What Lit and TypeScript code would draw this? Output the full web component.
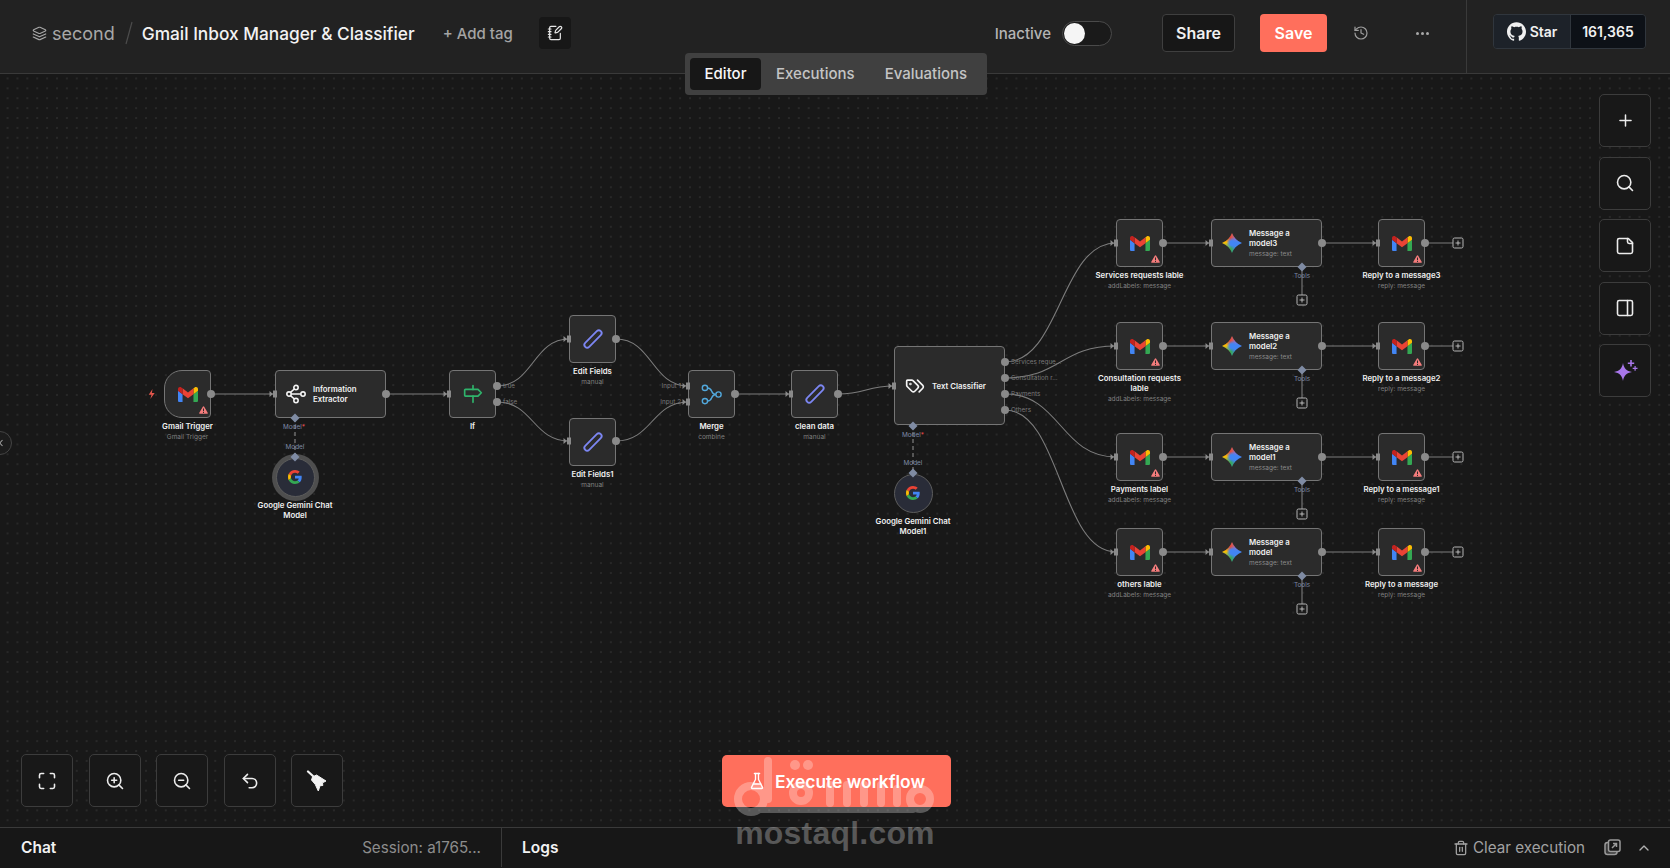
import { LitElement, html, css, svg } from 'lit';
import { customElement } from 'lit/decorators.js';

const TOP = 74;

const line = (d: string, size = 18, width = 2, cls = '') => html`
  <svg class=${cls} width=${size} height=${size} viewBox="0 0 24 24" fill="none" stroke="currentColor"
    stroke-width=${width} stroke-linecap="round" stroke-linejoin="round">
    ${d.split('|').map((p) => svg`<path d=${p}></path>`)}
  </svg>`;

const gmail = () => html`
  <svg width="20" height="15" viewBox="52 42 88 66">
    <path fill="#4285f4" d="M58 108h14V74L52 59v43c0 3.32 2.69 6 6 6" />
    <path fill="#34a853" d="M120 108h14c3.32 0 6-2.69 6-6V59l-20 15" />
    <path fill="#fbbc04" d="M120 48v26l20-15v-8c0-7.42-8.47-11.65-14.4-7.2" />
    <path fill="#ea4335" d="M72 74V48l24 18 24-18v26L96 92" />
    <path fill="#c5221f" d="M52 51v8l20 15V48l-5.6-4.2c-5.94-4.45-14.4-.22-14.4 7.2" />
  </svg>`;

const google = () => html`
  <svg width="14" height="14" viewBox="0 0 48 48">
    <path fill="#EA4335" d="M24 9.5c3.54 0 6.71 1.22 9.21 3.6l6.85-6.85C35.9 2.38 30.47 0 24 0 14.62 0 6.51 5.38 2.56 13.22l7.98 6.19C12.43 13.72 17.74 9.5 24 9.5z" />
    <path fill="#4285F4" d="M46.98 24.55c0-1.57-.15-3.09-.38-4.55H24v9.02h12.94c-.58 2.96-2.26 5.48-4.78 7.18l7.73 6c4.51-4.18 7.09-10.36 7.09-17.65z" />
    <path fill="#FBBC05" d="M10.53 28.59c-.48-1.45-.76-2.99-.76-4.59s.27-3.14.76-4.59l-7.98-6.19C.92 16.46 0 20.12 0 24c0 3.88.92 7.54 2.56 10.78l7.97-6.19z" />
    <path fill="#34A853" d="M24 48c6.48 0 11.93-2.13 15.89-5.81l-7.73-6c-2.15 1.45-4.92 2.3-8.16 2.3-6.26 0-11.57-4.22-13.47-9.91l-7.98 6.19C6.51 42.62 14.62 48 24 48z" />
  </svg>`;

const warn = () => html`
  <svg class="warn" width="9" height="8" viewBox="0 0 18 16">
    <path fill="#f47c7c" d="M9 .5a1.6 1.6 0 0 1 1.4.8l7 12a1.6 1.6 0 0 1-1.4 2.4H2a1.6 1.6 0 0 1-1.4-2.4l7-12A1.6 1.6 0 0 1 9 .5z" />
    <path fill="#2b2b2b" d="M8 5h2v5.5H8zM8 11.8h2v2H8z" />
  </svg>`;

const pencil = () => html`
  <svg width="24" height="24" viewBox="0 0 24 24" fill="none" stroke="#7c86f2" stroke-width="1.8" stroke-linejoin="round">
    <path transform="rotate(45 12 12)" d="M9.2 3.8a2.8 2.8 0 0 1 5.6 0V20.2a2.8 2.8 0 0 1-5.6 0z" />
  </svg>`;

const ifIcon = () => html`
  <svg width="20" height="20" viewBox="0 0 24 24" fill="none" stroke="#2fb36b" stroke-width="2" stroke-linejoin="round" stroke-linecap="round">
    <path d="M3 6.5h15l4 4-4 4H3a1 1 0 0 1-1-1v-6a1 1 0 0 1 1-1z" />
    <path d="M12 2v4.5M12 14.5V22" />
  </svg>`;

const mergeIcon = () => html`
  <svg width="21" height="21" viewBox="0 0 24 24" fill="none" stroke="#52a8dc" stroke-width="1.6">
    <circle cx="4.5" cy="4.5" r="3" /><circle cx="4.5" cy="19.5" r="3" /><circle cx="20" cy="12" r="3" />
    <path d="M7.500 4.500c6.500 0 3 7.500 9.500 7.500M7.500 19.500c6.500 0 3-7.500 9.500-7.500" />
  </svg>`;

const extractorIcon = () => html`
  <svg width="20" height="20" viewBox="0 0 24 24" fill="none" stroke="#f4f4f4" stroke-width="1.9">
    <circle cx="12" cy="4.2" r="2.6" /><circle cx="3.6" cy="12" r="2.6" /><circle cx="20.4" cy="12" r="2.6" /><circle cx="12" cy="19.8" r="2.6" />
    <path d="M6.2 12h11.6M10 6 5.4 10M10 18l-4.6-4" />
  </svg>`;

const tagsIcon = () =>
  html`<svg width="20" height="20" viewBox="0 0 24 24" fill="none" stroke="#f4f4f4" stroke-width="2" stroke-linecap="round" stroke-linejoin="round">
    <path d="m15 5 6.3 6.3a2.4 2.4 0 0 1 0 3.4L17 19" />
    <path d="M9.586 5.586A2 2 0 0 0 8.172 5H3a1 1 0 0 0-1 1v5.172a2 2 0 0 0 .586 1.414L8.29 18.29a2.426 2.426 0 0 0 3.42 0l3.58-3.58a2.426 2.426 0 0 0 0-3.42z" />
    <circle cx="6.5" cy="9.5" r=".5" />
  </svg>`;

const icons: Record<string, () => unknown> = {
  gmail,
  google,
  pencil,
  if: ifIcon,
  merge: mergeIcon,
  extractor: extractorIcon,
  tags: tagsIcon,
  gemini: () => html`<div class="gem"></div>`,
};

type FlowNode = {
  x: number;
  y: number;
  w?: number;
  h?: number;
  icon: string;
  label: string;
  sub?: string;
  cls?: string;
  warn?: boolean;
  wide?: boolean;
};

const ROWS = [
  { y: 243, label: 'Services requests lable', msg: 'Message a model3', reply: 'Reply to a message3' },
  { y: 346, label: 'Consultation requests lable', msg: 'Message a model2', reply: 'Reply to a message2' },
  { y: 457, label: 'Payments label', msg: 'Message a model1', reply: 'Reply to a message1' },
  { y: 552, label: 'others lable', msg: 'Message a model', reply: 'Reply to a message' },
];

const NODES: FlowNode[] = [
  { x: 164, y: 370, icon: 'gmail', label: 'Gmail Trigger', sub: 'Gmail Trigger', cls: 'trigger', warn: true },
  { x: 275, y: 370, w: 111, icon: 'extractor', label: 'Information Extractor', wide: true },
  { x: 449, y: 370, icon: 'if', label: 'If' },
  { x: 569, y: 315, icon: 'pencil', label: 'Edit Fields', sub: 'manual' },
  { x: 569, y: 418, icon: 'pencil', label: 'Edit Fields1', sub: 'manual' },
  { x: 688, y: 370, icon: 'merge', label: 'Merge', sub: 'combine' },
  { x: 791, y: 370, icon: 'pencil', label: 'clean data', sub: 'manual' },
  { x: 894, y: 346, w: 111, h: 79, icon: 'tags', label: 'Text Classifier', wide: true },
  { x: 275.5, y: 457.5, w: 39, h: 39, icon: 'google', label: 'Google Gemini Chat Model', cls: 'round ringed' },
  { x: 893.5, y: 473.5, w: 39, h: 39, icon: 'google', label: 'Google Gemini Chat Model1', cls: 'round' },
  ...ROWS.flatMap((r): FlowNode[] => [
    { x: 1116, y: r.y - 24, icon: 'gmail', label: r.label, sub: 'addLabels: message', warn: true },
    { x: 1211, y: r.y - 24, w: 111, icon: 'gemini', label: r.msg, sub: 'message: text', wide: true },
    { x: 1378, y: r.y - 24, icon: 'gmail', label: r.reply, sub: 'reply: message', warn: true },
  ]),
];

const flow = (sx: number, sy: number, tx: number, ty: number) => {
  const dx = Math.max(Math.abs(tx - sx) / 2, 12);
  return `M${sx} ${sy}C${sx + dx} ${sy} ${tx - dx} ${ty} ${tx} ${ty}`;
};

const CLASSIFIER_OUT = [362, 378, 394, 410];

const EDGES: number[][] = [
  [211, 394, 275, 394],
  [386, 394, 449, 394],
  [497, 386, 569, 339],
  [497, 402, 569, 441],
  [616, 339, 688, 386],
  [616, 441, 688, 402],
  [735, 394, 791, 394],
  [838, 394, 894, 386],
  ...ROWS.flatMap((r, i) => [
    [1005, CLASSIFIER_OUT[i], 1116, r.y],
    [1163, r.y, 1211, r.y],
    [1322, r.y, 1378, r.y],
  ]),
];

const OUTPUTS: number[][] = [
  [211, 394], [386, 394], [497, 386], [497, 402], [616, 339], [616, 441], [735, 394], [838, 394],
  ...CLASSIFIER_OUT.map((y) => [1005, y]),
  ...ROWS.flatMap((r) => [[1163, r.y], [1322, r.y], [1425, r.y]]),
];

const HANDLE_TEXT: [number, number, string, string][] = [
  [503, 386, 'true', 'start'],
  [503, 402, 'false', 'start'],
  [681, 386, 'Input 1', 'end'],
  [681, 402, 'Input 2', 'end'],
  [1011, 362, 'Services reque...', 'start'],
  [1011, 378, 'Consultation r...', 'start'],
  [1011, 394, 'Payments', 'start'],
  [1011, 410, 'Others', 'start'],
];

const TOOLBAR = [
  'M8 3H5a2 2 0 0 0-2 2v3|M21 8V5a2 2 0 0 0-2-2h-3|M3 16v3a2 2 0 0 0 2 2h3|M16 21h3a2 2 0 0 0 2-2v-3',
  'M19 11a8 8 0 1 1-16 0 8 8 0 0 1 16 0z|m21 21-4.35-4.35|M11 8v6|M8 11h6',
  'M19 11a8 8 0 1 1-16 0 8 8 0 0 1 16 0z|m21 21-4.35-4.35|M8 11h6',
  'M9 14 4 9l5-5|M4 9h10.5a5.5 5.5 0 0 1 5.5 5.5a5.5 5.5 0 0 1-5.5 5.5H11',
];

const SIDE = [
  'M12 5v14|M5 12h14',
  'M19 11a8 8 0 1 1-16 0 8 8 0 0 1 16 0z|m21 21-4.3-4.3',
  'M16 3H5a2 2 0 0 0-2 2v14a2 2 0 0 0 2 2h14a2 2 0 0 0 2-2V8Z|M15 3v4a2 2 0 0 0 2 2h4',
  'M5 3h14a2 2 0 0 1 2 2v14a2 2 0 0 1-2 2H5a2 2 0 0 1-2-2V5a2 2 0 0 1 2-2z|M15 3v18',
];

@customElement('app-root')
export class AppRoot extends LitElement {
  static styles = css`
    :host {
      display: block;
      font-family: Inter, 'Liberation Sans', sans-serif;
      color: #f0f0f0;
    }
    * {
      box-sizing: border-box;
    }
    .app {
      position: relative;
      display: flex;
      flex-direction: column;
      height: 100vh;
      overflow: hidden;
      background: #181818;
    }
    header {
      display: flex;
      height: 74px;
      flex: none;
      padding-left: 32px;
      background: #222222;
      border-bottom: 1px solid #3a3a3a;
    }
    .left,
    .actions {
      display: flex;
      align-items: center;
      padding-bottom: 7px;
    }
    .project {
      display: flex;
      align-items: center;
      gap: 5px;
      margin-top: 1px;
      color: #a8a8a8;
      font-size: 18px;
    }
    .slash {
      margin: 0 9px 0 10px;
      flex: none;
    }
    .title {
      margin-top: 1px;
      font-size: 17.3px;
      font-weight: 500;
      color: #f2f2f2;
      white-space: nowrap;
    }
    .add-tag {
      margin-top: 1px;
      margin-left: 28px;
      font-size: 15px;
      font-weight: 500;
      color: #a4a4a4;
      white-space: nowrap;
    }
    .note {
      display: flex;
      align-items: center;
      justify-content: center;
      width: 32px;
      height: 32px;
      margin-left: 26px;
      background: #171717;
      border-radius: 4px;
      color: #e6e6e6;
    }
    .right {
      display: flex;
      margin-left: auto;
    }
    .status {
      margin-top: 1px;
      font-size: 15px;
      font-weight: 500;
      color: #b4b4b4;
    }
    .toggle {
      display: flex;
      align-items: center;
      width: 50px;
      height: 25px;
      margin-left: 11px;
      padding-left: 1px;
      background: #1a1a1a;
      border: 1px solid #4a4a4a;
      border-radius: 13px;
    }
    .knob {
      width: 21px;
      height: 21px;
      border-radius: 50%;
      background: #f5f5f5;
    }
    .btn {
      display: flex;
      align-items: center;
      justify-content: center;
      height: 38px;
      font-size: 16px;
      font-weight: 600;
      border-radius: 4px;
    }
    .share {
      width: 73px;
      margin-left: 50px;
      background: #171717;
      border: 1px solid #3f3f3f;
    }
    .save {
      width: 67px;
      margin-left: 25px;
      background: #ff6f5c;
      color: #fff;
    }
    .history {
      display: flex;
      margin-left: 26px;
      color: #9e9e9e;
    }
    .more {
      display: flex;
      gap: 2px;
      margin-left: 47px;
      margin-right: 37px;
    }
    .more i {
      width: 3px;
      height: 3px;
      border-radius: 50%;
      background: #a8a8a8;
    }
    .gh-wrap {
      display: flex;
      align-items: center;
      padding: 0 24px 10px 26px;
      border-left: 1px solid #3a3a3a;
    }
    .gh {
      display: flex;
      width: 153px;
      height: 35px;
      border: 1px solid #30363d;
      border-radius: 4px;
      font-size: 14px;
      font-weight: 600;
      overflow: hidden;
    }
    .gh span {
      display: flex;
      align-items: center;
      justify-content: center;
    }
    .gh .star {
      width: 77px;
      gap: 4px;
      background: #1d2229;
      border-right: 1px solid #30363d;
    }
    .gh .count {
      flex: 1;
      background: #0d1117;
    }
    .tabs {
      position: absolute;
      left: 685px;
      top: 53px;
      display: flex;
      width: 302px;
      height: 42px;
      padding: 5px;
      background: #404040;
      border-radius: 4px;
      font-size: 15px;
      font-weight: 500;
      color: #c4c4c4;
      z-index: 3;
    }
    .tabs span {
      display: flex;
      align-items: center;
      justify-content: center;
      padding-bottom: 1px;
    }
    .tabs .on {
      width: 71px;
      background: #171717;
      border-radius: 4px;
      color: #f7f7f7;
    }
    .tabs .exec {
      margin-left: 15px;
    }
    .tabs .eval {
      margin-left: 30px;
    }
    .canvas {
      position: relative;
      flex: 1;
      overflow: hidden;
      background-color: #181818;
      background-image: radial-gradient(circle, #404040 0.55px, transparent 0.8px);
      background-size: 9.9px 9.9px;
      background-position: 2.6px -0.5px;
    }
    .layer {
      position: absolute;
      left: 0;
      top: 0;
      pointer-events: none;
    }
    .node {
      position: absolute;
      display: flex;
      flex-direction: column;
      align-items: center;
    }
    .box {
      position: relative;
      display: flex;
      align-items: center;
      justify-content: center;
      flex: none;
      width: 100%;
      background: #2b2b2b;
      border: 1px solid #757575;
      border-radius: 4px;
    }
    .trigger .box {
      border-radius: 18px 4px 4px 18px;
    }
    .round .box {
      background: #292c38;
      border-color: #5c5c5c;
      border-radius: 50%;
    }
    .ringed .box {
      box-shadow: 0 0 0 4px #4e4e4e;
    }
    .wide .box {
      justify-content: flex-start;
      gap: 7px;
      padding-left: 10px;
    }
    .wide .box > svg,
    .wide .gem {
      flex: none;
    }
    .warn {
      position: absolute;
      right: 2px;
      bottom: 3px;
    }
    .gem {
      width: 20px;
      height: 20px;
      background: radial-gradient(circle, #4285f4 0 16%, transparent 40%),
        conic-gradient(#d9584f 0deg, #8a6fd0 35deg, #4285f4 80deg, #4285f4 140deg, #34a853 190deg, #8bb944 240deg, #fbbc04 275deg, #ea4335 340deg, #d9584f 360deg);
      clip-path: path('M10 0Q12.8 7.2 20 10Q12.8 12.8 10 20Q7.2 12.8 0 10Q7.2 7.2 10 0Z');
    }
    .inner {
      min-width: 0;
      font-size: 7.8px;
      font-weight: 600;
      line-height: 10px;
      color: #f0f0f0;
    }
    .inner small {
      display: block;
      margin-top: 2px;
      font-size: 6.5px;
      font-weight: 400;
      line-height: 9px;
      color: #8a8a8a;
    }
    .wide .inner {
      width: 62px;
    }
    .label {
      flex: none;
      width: 96px;
      margin-top: 3px;
      font-size: 7.8px;
      font-weight: 600;
      line-height: 10px;
      text-align: center;
      color: #f0f0f0;
    }
    .sub {
      flex: none;
      width: 96px;
      margin-top: 2px;
      font-size: 6.5px;
      line-height: 9px;
      text-align: center;
      color: #808080;
      white-space: nowrap;
    }
    .htext {
      font-size: 6.3px;
      fill: #7a7a7a;
      dominant-baseline: middle;
    }
    .mtext {
      font-size: 6.4px;
      fill: #7d8aa6;
      text-anchor: middle;
      dominant-baseline: middle;
    }
    .tool {
      display: flex;
      align-items: center;
      justify-content: center;
      width: 52px;
      height: 53px;
      background: #181818;
      border: 1px solid #3c3c3c;
      border-radius: 5px;
      color: #ececec;
    }
    .toolbar {
      position: absolute;
      left: 21px;
      bottom: 20px;
      display: flex;
      gap: 15.5px;
    }
    .side {
      position: absolute;
      right: 19px;
      top: 20px;
      display: flex;
      flex-direction: column;
      gap: 9.5px;
    }
    .grip {
      position: absolute;
      left: -12px;
      top: 357px;
      display: flex;
      align-items: center;
      justify-content: flex-end;
      width: 24px;
      height: 24px;
      padding-right: 8px;
      background: #1c1c1c;
      border: 1px solid #444;
      border-radius: 50%;
      color: #a0a0a0;
    }
    .run {
      position: absolute;
      left: 722px;
      bottom: 20px;
      display: flex;
      align-items: center;
      justify-content: center;
      gap: 9px;
      width: 229px;
      height: 52px;
      background: #ff6f5c;
      border-radius: 5px;
      font-size: 17.4px;
      font-weight: 600;
      color: #fff;
    }
    footer {
      display: flex;
      flex: none;
      height: 41px;
      padding-bottom: 1px;
      background: #171717;
      border-top: 1px solid #3a3a3a;
      font-size: 15.5px;
    }
    .chat {
      display: flex;
      align-items: center;
      justify-content: space-between;
      width: 502px;
      padding: 0 20px 0 21px;
      border-right: 1px solid #3a3a3a;
    }
    .chat b,
    .logs b {
      font-weight: 600;
      color: #f2f2f2;
    }
    .session {
      font-size: 15.2px;
      color: #8c8c8c;
    }
    .logs {
      display: flex;
      align-items: center;
      flex: 1;
      padding: 0 18px 0 20px;
    }
    .clear {
      display: flex;
      align-items: center;
      gap: 4px;
      margin-left: auto;
      font-size: 15.2px;
      color: #a2a2a2;
    }
    .pop {
      display: flex;
      margin-left: 19px;
      color: #9a9a9a;
    }
    .chev {
      display: flex;
      margin-left: 15px;
      color: #b0b0b0;
    }
    .mark {
      position: absolute;
      left: 735px;
      top: 755px;
      width: 200px;
      z-index: 4;
      pointer-events: none;
      text-align: center;
      font-family: 'Liberation Sans', sans-serif;
      font-weight: 700;
      font-size: 32px;
      line-height: 32px;
      letter-spacing: 0.2px;
      color: rgba(255, 255, 255, 0.28);
    }
    .mark svg {
      display: block;
      overflow: visible;
    }
  `;

  private renderNode(n: FlowNode) {
    const w = n.w ?? 47;
    const h = n.h ?? 48;
    return html`
      <div class="node ${n.cls ?? ''} ${n.wide ? 'wide' : ''}" style="left:${n.x}px;top:${n.y - TOP}px;width:${w}px">
        <div class="box" style="height:${h}px">
          ${icons[n.icon]()}
          ${n.wide ? html`<div class="inner">${n.label}${n.sub ? html`<small>${n.sub}</small>` : ''}</div>` : ''}
          ${n.warn ? warn() : ''}
        </div>
        ${n.wide ? '' : html`<div class="label">${n.label}</div>`}
        ${n.sub && !n.wide ? html`<div class="sub">${n.sub}</div>` : ''}
      </div>`;
  }

  private inputHandle(x: number, y: number) {
    return svg`<path d="M${x - 5.5} ${y - 3}l3.5 3-3.5 3z" fill="#8a8a8a"></path>
      <rect x=${x - 2} y=${y - 3.5} width="4" height="7" fill="#8a8a8a"></rect>`;
  }

  private plus(x: number, y: number) {
    return svg`<rect x=${x - 5} y=${y - 5} width="10" height="10" rx="1.5" fill="#1c1c1c" stroke="#b4b4b4"></rect>
      <path d="M${x - 2.5} ${y}h5M${x} ${y - 2.5}v5" stroke="#d8d8d8" stroke-width=".8"></path>`;
  }

  private diamond(x: number, y: number) {
    return svg`<path d="M${x} ${y - 4.5}l4.5 4.5-4.5 4.5-4.5-4.5z" fill="#7f8ba3"></path>`;
  }

  render() {
    const viewBox = `0 ${TOP} 1670 753`;
    return html`
      <div class="app">
        <header>
          <div class="left">
            <div class="project">${line(
              'm12.83 2.18a2 2 0 0 0-1.66 0L2.6 6.08a1 1 0 0 0 0 1.83l8.58 3.91a2 2 0 0 0 1.66 0l8.58-3.9a1 1 0 0 0 0-1.83Z|m22 17.65-9.17 4.16a2 2 0 0 1-1.66 0L2 17.65|m22 12.65-9.17 4.16a2 2 0 0 1-1.66 0L2 12.65',
              15,
              1.8,
            )}second</div>
            <svg class="slash" width="8" height="24" viewBox="0 0 8 24"><path d="M7 1 1 23" stroke="#4c4c4c" stroke-width="1.2"></path></svg>
            <div class="title">Gmail Inbox Manager &amp; Classifier</div>
            <div class="add-tag">+ Add tag</div>
            <div class="note">${line(
              'M13.4 2H6a2 2 0 0 0-2 2v16a2 2 0 0 0 2 2h12a2 2 0 0 0 2-2v-7.4|M2 6h4|M2 10h4|M2 14h4|M2 18h4|M21.378 5.626a1 1 0 1 0-3.004-3.004l-5.01 5.012a2 2 0 0 0-.506.854l-.837 2.87a.5.5 0 0 0 .62.62l2.87-.837a2 2 0 0 0 .854-.506z',
              16,
              1.8,
            )}</div>
          </div>
          <div class="right">
            <div class="actions">
              <span class="status">Inactive</span>
              <div class="toggle"><div class="knob"></div></div>
              <div class="btn share">Share</div>
              <div class="btn save">Save</div>
              <div class="history">${line('M3 12a9 9 0 1 0 9-9 9.75 9.75 0 0 0-6.74 2.74L3 8|M3 3v5h5|M12 7v5l4 2', 16, 1.8)}</div>
              <div class="more"><i></i><i></i><i></i></div>
            </div>
            <div class="gh-wrap">
              <div class="gh">
                <span class="star">
                  <svg width="19" height="19" viewBox="0 0 24 24" fill="#f0f0f0"><path d="M12 .297c-6.63 0-12 5.373-12 12 0 5.303 3.438 9.8 8.205 11.385.6.113.82-.258.82-.577 0-.285-.01-1.04-.015-2.04-3.338.724-4.042-1.61-4.042-1.61C4.422 18.07 3.633 17.7 3.633 17.7c-1.087-.744.084-.729.084-.729 1.205.084 1.838 1.236 1.838 1.236 1.07 1.835 2.809 1.305 3.495.998.108-.776.417-1.305.76-1.605-2.665-.3-5.466-1.332-5.466-5.93 0-1.31.465-2.38 1.235-3.22-.135-.303-.54-1.523.105-3.176 0 0 1.005-.322 3.3 1.23.96-.267 1.98-.399 3-.405 1.02.006 2.04.138 3 .405 2.28-1.552 3.285-1.23 3.285-1.23.645 1.653.24 2.873.12 3.176.765.84 1.23 1.91 1.23 3.22 0 4.61-2.805 5.625-5.475 5.92.42.36.81 1.096.81 2.22 0 1.606-.015 2.896-.015 3.286 0 .315.21.69.825.57C20.565 22.092 24 17.592 24 12.297c0-6.627-5.373-12-12-12"></path></svg>
                  Star
                </span>
                <span class="count">161,365</span>
              </div>
            </div>
          </div>
        </header>

        <div class="tabs">
          <span class="on">Editor</span>
          <span class="exec">Executions</span>
          <span class="eval">Evaluations</span>
        </div>

        <div class="canvas">
          <svg class="layer" width="1670" height="753" viewBox=${viewBox} fill="none">
            ${EDGES.map(([a, b, c, d]) => svg`<path d=${flow(a, b, c, d)} stroke="#7c7c7c" stroke-width="1.1"></path>`)}
            <path d="M295 418V457M913 425V473" stroke="#808080" stroke-width="1.2" stroke-dasharray="4 3"></path>
            ${ROWS.map(
              (r) => svg`<path d="M1302 ${r.y + 24}V${r.y + 52}M1425 ${r.y}H1453" stroke="#7c7c7c" stroke-width="1.1"></path>`,
            )}
          </svg>

          ${NODES.map((n) => this.renderNode(n))}

          <svg class="layer" width="1670" height="753" viewBox=${viewBox} font-family="Inter, sans-serif">
            ${EDGES.map(([, , c, d]) => this.inputHandle(c, d))}
            ${OUTPUTS.map(([x, y]) => svg`<circle cx=${x} cy=${y} r="4" fill="#8a8a8a"></circle>`)}
            ${HANDLE_TEXT.map(([x, y, t, anchor]) => svg`<text class="htext" x=${x} y=${y} text-anchor=${anchor}>${t}</text>`)}
            ${this.diamond(295, 418)} ${this.diamond(295, 457)} ${this.diamond(913, 426)} ${this.diamond(913, 473)}
            <text class="mtext" x="294" y="427">Model<tspan fill="#e5484d">*</tspan></text>
            <text class="mtext" x="295" y="447">Model</text>
            <text class="mtext" x="913" y="435">Model<tspan fill="#e5484d">*</tspan></text>
            <text class="mtext" x="913" y="463">Model</text>
            ${ROWS.map(
              (r) => svg`${this.diamond(1302, r.y + 24)}
                <text class="mtext" x="1302" y=${r.y + 33}>Tools</text>
                ${this.plus(1302, r.y + 57)} ${this.plus(1458, r.y)}`,
            )}
            <path d="M152.5 389l-3.800 5.800h2.800l-1.200 4.200 4.400-6h-2.800z" fill="#e2564c"></path>
          </svg>

          <div class="grip">
            <svg width="4" height="8" viewBox="0 0 4 8" fill="none" stroke="currentColor" stroke-width="1.1"><path d="M3.5 1 .8 4l2.700 3"></path></svg>
          </div>

          <div class="side">
            ${SIDE.map((d, i) => html`<div class="tool">${line(d, i === 0 ? 19 : 20, 1.9)}</div>`)}
            <div class="tool">
              <svg width="26" height="26" viewBox="0 0 26 26" fill="#a877ea">
                <path d="M11 5c.9 5.400 3.600 8 9 9-5.400 1-8.100 3.600-9 9-.9-5.400-3.600-8-9-9 5.400-1 8.100-3.600 9-9z"></path>
                <path d="M18.2 2h1.600v2.400h2.400V6h-2.400v2.400h-1.600V6h-2.400V4.400h2.400zM22.5 8h1.200v1.800h1.800V11h-1.800v1.800h-1.200V11h-1.800V9.800h1.800z"></path>
              </svg>
            </div>
          </div>

          <div class="toolbar">
            ${TOOLBAR.map((d) => html`<div class="tool">${line(d, 20, 1.9)}</div>`)}
            <div class="tool">
              <svg width="22" height="22" viewBox="0 0 22 22" fill="#f2f2f2" stroke="#f2f2f2" stroke-linejoin="round">
                <path d="M2 1.5 8 7" stroke-width="2.2" stroke-linecap="round"></path>
                <path d="M6.5 7 10.5 5 20 11l-3.500 1.800.3 2.700-2.800.2-1.700 5.300-3-6.500L5.500 10z" stroke-width="1"></path>
              </svg>
            </div>
          </div>

          <div class="run">${line(
            'M10 2v7.527a2 2 0 0 1-.211.896L4.72 20.55a1 1 0 0 0 .9 1.45h12.76a1 1 0 0 0 .9-1.45l-5.069-10.127A2 2 0 0 1 14 9.527V2|M8.5 2h7|M7 16h10',
            18,
            1.8,
          )}Execute workflow</div>
        </div>

        <footer>
          <div class="chat"><b>Chat</b><span class="session">Session: a1765...</span></div>
          <div class="logs">
            <b>Logs</b>
            <div class="clear">${line('M3 6h18|M19 6v14c0 1-1 2-2 2H7c-1 0-2-1-2-2V6|M8 6V4c0-1 1-2 2-2h4c1 0 2 1 2 2v2|M10 11v6|M14 11v6', 16, 1.9)}Clear execution</div>
            <div class="pop">
              <svg width="17" height="17" viewBox="0 0 17 17" fill="none" stroke="currentColor" stroke-width="1.5">
                <rect x="1" y="3.5" width="12" height="12" rx="2.5" fill="#3a3a3a"></rect>
                <rect x="4.5" y="1" width="11.5" height="11.5" rx="2" fill="#171717"></rect>
                <path d="M8 9l4.500-4.500M9 4.500h3.500V8"></path>
              </svg>
            </div>
            <div class="chev">${line('m18 15-6-6-6 6', 16, 2)}</div>
          </div>
        </footer>

        <div class="mark">
          <svg width="200" height="62" viewBox="0 0 200 62" fill="none">
            <g opacity=".28" stroke="#fff" stroke-width="8" stroke-linecap="round">
              <circle cx="16" cy="44" r="13"></circle>
              <path d="M33 6v38"></path>
              <circle cx="66" cy="38" r="8"></circle>
              <path d="M22 55h156" stroke-width="6"></path>
              <path d="M95 30v18M112 30v18M129 30v18M146 30v18M162 34v14"></path>
              <circle cx="185" cy="44" r="10"></circle>
              <circle cx="60" cy="10" r="5" fill="#fff" stroke="none"></circle>
              <circle cx="73" cy="10" r="5" fill="#fff" stroke="none"></circle>
            </g>
          </svg>
          mostaql.com
        </div>
      </div>
    `;
  }
}
